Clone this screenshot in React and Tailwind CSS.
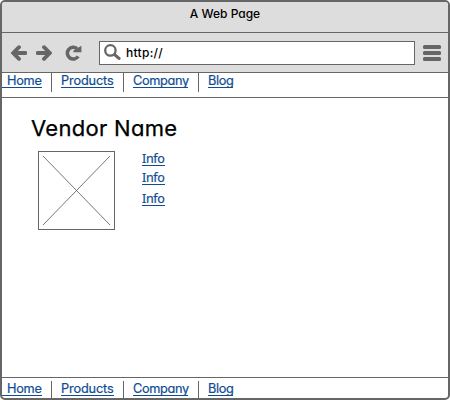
const links = [
  { label: "Home", box: "w-[41px] pl-[6px] -ml-px", tracking: "tracking-[-0.3px]" },
  { label: "Products", box: "w-[53px]", tracking: "tracking-[-0.15px]" },
  { label: "Company", box: "w-[55px]", tracking: "tracking-[-0.35px]" },
  { label: "Blog", box: "w-[25px]", tracking: "tracking-[-0.35px]" },
];

const items = [
  { wrap: "w-[50px] border-r border-[#666]" },
  { wrap: "w-[72px] pl-[9px] border-r border-[#666]" },
  { wrap: "w-[75px] pl-[9px] border-r border-[#666]" },
  { wrap: "pl-[9px]" },
];

function NavLinks() {
  return (
    <nav className="flex h-[19px] text-[12.75px] leading-[16px] text-[#0f4c92]">
      {links.map((link, i) => (
        <div key={link.label} className={items[i].wrap}>
          <a className={`block h-[15px] whitespace-nowrap border-b border-[#0f4c92] [-webkit-text-stroke:0.2px_#0f4c92] ${link.box} ${link.tracking}`}>
            {link.label}
          </a>
        </div>
      ))}
    </nav>
  );
}

function Arrow({ flip }) {
  return (
    <svg viewBox="0 0 16 16" className={`h-4 w-4 ${flip ? "rotate-180" : ""}`} fill="none" stroke="#666" strokeLinecap="round">
      <path d="M8 2.2 2.2 8 8 13.8" strokeWidth="3.8" />
      <path d="M3.5 8h10.9" strokeWidth="3.8" />
    </svg>
  );
}

export default function App() {
  return (
    <div className="flex h-[400px] w-[450px] flex-col overflow-hidden rounded-[5px] border-2 border-[#666] bg-white font-['Inter',sans-serif] [font-feature-settings:'cv11']">
      <header className="h-[31px] shrink-0 border-b border-[#666] bg-[#ddd] pt-[3px] text-center text-[12px] font-medium leading-[17px] text-black">
        A Web Page
      </header>
      <div className="flex h-10 shrink-0 items-center border-b border-[#666] bg-[#ddd] pl-[9px]">
        <Arrow />
        <div className="ml-[9px] flex">
          <Arrow flip />
        </div>
        <svg viewBox="0 0 17 16" className="ml-[13px] mr-px h-4 w-[17px]" fill="none">
          <path d="M12 3.6A5.9 5.9 0 1 0 13.2 11.4" stroke="#666" strokeWidth="3.5" />
          <path d="M16.4.8v6.4H8.4V5.6l3-1.8Z" fill="#666" />
        </svg>
        <div className="ml-4 flex h-6 w-[316px] items-center border border-[#666] bg-white pl-1">
          <svg viewBox="0 0 17 17" className="h-[17px] w-[17px]" fill="none" stroke="#666">
            <circle cx="6.4" cy="6.4" r="5.2" strokeWidth="2.3" />
            <path d="m10.6 10.6 4.4 3.8" strokeWidth="3.2" strokeLinecap="round" />
          </svg>
          <span className="ml-[5px] pt-px text-[12px] font-medium leading-[18px] tracking-[0.3px] text-black">http://</span>
        </div>
        <div className="ml-2 flex w-[18px] flex-col gap-[2px]">
          <i className="h-1 rounded-[1.5px] bg-[#666]" />
          <i className="h-1 rounded-[1.5px] bg-[#666]" />
          <i className="h-1 rounded-[1.5px] bg-[#666]" />
        </div>
      </div>
      <div className="h-[25px] shrink-0 border-b border-[#666]">
        <NavLinks />
      </div>
      <main className="min-h-0 flex-1 pl-[29px] pt-[16px]">
        <h1 className="h-[37px] whitespace-nowrap text-[22px] leading-[28px] tracking-[0.3px] text-black [-webkit-text-stroke:0.25px_black]">Vendor Name</h1>
        <div className="flex pl-[7px]">
          <div className="flex h-[79px] w-[77px] items-center justify-center border border-[#666]">
            <svg viewBox="0 0 67 69" className="h-[69px] w-[67px]" stroke="#666" strokeWidth="0.9">
              <path d="m0 0 67 69M67 0 0 69" />
            </svg>
          </div>
          <div className="ml-[27px] w-[23px] font-['Noto_Sans',sans-serif] text-[12.5px] leading-[16px] tracking-[-0.3px] text-[#0f4c92] [-webkit-text-stroke:0.2px_#0f4c92]">
            <a className="block h-[15px] border-b border-[#0f4c92]">Info</a>
            <a className="mt-1 block h-[15px] border-b border-[#0f4c92]">Info</a>
            <a className="mt-1.5 block h-[15px] border-b border-[#0f4c92]">Info</a>
          </div>
        </div>
      </main>
      <footer className="h-[21px] shrink-0 border-t border-[#666] pt-[3px]">
        <NavLinks />
      </footer>
    </div>
  );
}
